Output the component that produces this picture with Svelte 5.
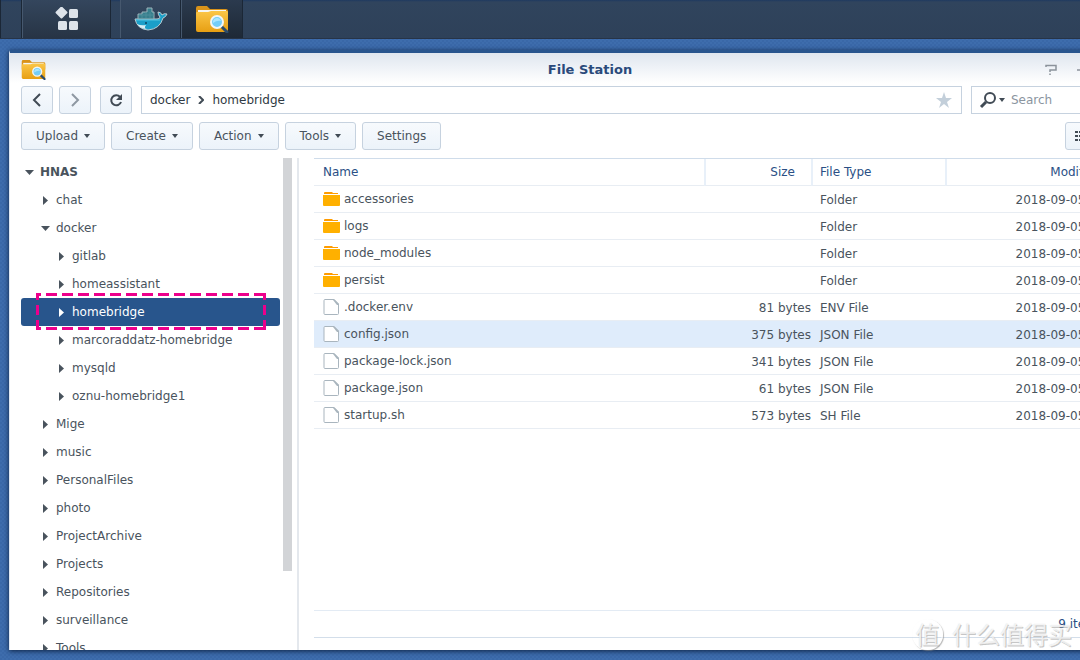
<script lang="ts">
  type Node = { name: string; level: number; open?: boolean };
  type Entry = { name: string; size: string; type: string; modified: string };

  const tree: Node[] = [
    { name: 'HNAS', level: 0, open: true },
    { name: 'chat', level: 1 },
    { name: 'docker', level: 1, open: true },
    { name: 'gitlab', level: 2 },
    { name: 'homeassistant', level: 2 },
    { name: 'homebridge', level: 2 },
    { name: 'marcoraddatz-homebridge', level: 2 },
    { name: 'mysqld', level: 2 },
    { name: 'oznu-homebridge1', level: 2 },
    { name: 'Mige', level: 1 },
    { name: 'music', level: 1 },
    { name: 'PersonalFiles', level: 1 },
    { name: 'photo', level: 1 },
    { name: 'ProjectArchive', level: 1 },
    { name: 'Projects', level: 1 },
    { name: 'Repositories', level: 1 },
    { name: 'surveillance', level: 1 },
    { name: 'Tools', level: 1 },
  ];

  const date = '2018-09-05 00:00:00';
  const files: Entry[] = [
    { name: 'accessories', size: '', type: 'Folder', modified: date },
    { name: 'logs', size: '', type: 'Folder', modified: date },
    { name: 'node_modules', size: '', type: 'Folder', modified: date },
    { name: 'persist', size: '', type: 'Folder', modified: date },
    { name: '.docker.env', size: '81 bytes', type: 'ENV File', modified: date },
    { name: 'config.json', size: '375 bytes', type: 'JSON File', modified: date },
    { name: 'package-lock.json', size: '341 bytes', type: 'JSON File', modified: date },
    { name: 'package.json', size: '61 bytes', type: 'JSON File', modified: date },
    { name: 'startup.sh', size: '573 bytes', type: 'SH File', modified: date },
  ];

  const menus = ['Upload', 'Create', 'Action', 'Tools'];

  let currentFolder = $state('homebridge');
  let currentFile = $state('config.json');
  let query = $state('');
</script>

{#snippet stationIcon(id: string)}
  <svg class="station-icon" viewBox="0 0 34 28" aria-hidden="true">
    <defs>
      <linearGradient id="{id}-body" x1="0" y1="0" x2="0" y2="1">
        <stop offset="0" stop-color="#fbc647" />
        <stop offset="1" stop-color="#e79f13" />
      </linearGradient>
    </defs>
    <path d="M1 3Q1 1 3 1H12L15 4H31Q33 4 33 6V14H1Z" fill="#d9931a" />
    <rect x="3" y="5" width="28" height="8" fill="#f6f6f2" />
    <path d="M1 8Q1 7 2 7H13L16 6H32Q33 6 33 7V25Q33 27 31 27H3Q1 27 1 25Z" fill="url(#{id}-body)" />
    <path d="M27 22L32 27" stroke="#2b4c6c" stroke-width="3" stroke-linecap="round" />
    <circle cx="22" cy="17" r="6" fill="#74cdf8" stroke="#f2f5f4" stroke-width="2" />
    <path d="M18 16Q19 13 22 13Q25 13 26 16Q22 15 18 18Z" fill="#a9e5ff" />
  </svg>
{/snippet}

<div class="desktop">
  <header class="taskbar">
    <button class="task task-edge" aria-label="Show desktop"></button>
    <button class="task task-main" aria-label="Main menu">
      <svg width="24" height="24" viewBox="0 0 24 24" fill="#dde3ea">
        <rect x="2" y="1" width="9" height="9" rx="1" transform="rotate(45 6.500 5.500)" />
        <rect x="14" y="2" width="9" height="9" rx="1.500" />
        <rect x="3" y="14" width="9" height="9" rx="1.500" />
        <rect x="14" y="14" width="9" height="9" rx="1.500" />
      </svg>
    </button>
    <button class="task task-docker" aria-label="Docker">
      <svg width="34" height="24" viewBox="0 0 34 24">
        <path d="M1 12H23Q26 12 26 10Q24 8 24 5Q27 5 28 8Q30 6 33 7Q32 10 29 11Q26 22 14 23Q3 22 1 12Z" fill="#1b9fc9" stroke="#b8cbd2" stroke-width="1" />
        <path d="M3 17Q7 19 12 18Q9 22 14 22Q6 22 3 17Z" fill="#d8eef4" />
        <path d="M4 12V7H8V5H13V1H18V5H20V12Z" fill="#377f8d" stroke="#9bb4bb" stroke-width="1" />
        <path d="M8 8V11M12 5V11M16 5V11M5 8H20" stroke="#4c8d9a" stroke-width="1" />
        <path d="M2 13H26" stroke="#55c5e2" stroke-width="1" />
        <circle cx="12" cy="16" r="1" fill="#0b4660" />
      </svg>
    </button>
    <button class="task task-files" aria-label="File Station">{@render stationIcon('task')}</button>
  </header>

  <main class="window">
    <div class="titlebar">
      {@render stationIcon('title')}
      <h1>File Station</h1>
      <div class="window-controls">
        <button aria-label="Help">
          <svg width="12" height="12" viewBox="0 0 12 12"><path d="M1 3V1.500H11V6H5V8M5 9.500V11" fill="none" stroke="#8b929b" stroke-width="1.500" /></svg>
        </button>
        <button aria-label="Minimize">
          <svg width="12" height="12" viewBox="0 0 12 12"><path d="M0 6H12" stroke="#8b929b" stroke-width="1.500" /></svg>
        </button>
        <button aria-label="Close">
          <svg width="12" height="12" viewBox="0 0 12 12"><path d="M1 1L11 11M11 1L1 11" stroke="#8b929b" stroke-width="1.500" /></svg>
        </button>
      </div>
    </div>

    <div class="navbar">
      <div class="history">
        <button class="btn square" aria-label="Back">
          <svg width="14" height="14" viewBox="0 0 14 14"><path d="M10 1L4 7L10 13" fill="none" stroke="#414b55" stroke-width="2" /></svg>
        </button>
        <button class="btn square" aria-label="Forward">
          <svg width="14" height="14" viewBox="0 0 14 14"><path d="M4 1L10 7L4 13" fill="none" stroke="#8e98a2" stroke-width="2" /></svg>
        </button>
      </div>
      <button class="btn square" aria-label="Refresh">
        <svg width="14" height="14" viewBox="0 0 14 14">
          <path d="M11 4A5 5 0 1 0 12 9" fill="none" stroke="#414b55" stroke-width="2" />
          <path d="M13 1V7H7Z" fill="#414b55" />
        </svg>
      </button>
      <nav class="path" aria-label="Path">
        <a href="#docker">docker</a>
        <svg width="6" height="8" viewBox="0 0 6 8"><path d="M1 0L5 4L1 8" fill="none" stroke="#414b55" stroke-width="2" /></svg>
        <a href="#homebridge">homebridge</a>
        <button class="star" aria-label="Add to favorites">
          <svg width="16" height="16" viewBox="0 0 16 16"><path d="M8 0L10 6H16L11 10L13 16L8 12L3 16L5 10L0 6H6Z" fill="#c3cfda" /></svg>
        </button>
      </nav>
      <label class="search">
        <svg width="18" height="18" viewBox="0 0 18 18">
          <circle cx="11" cy="7" r="5" fill="none" stroke="#414b55" stroke-width="2" />
          <path d="M7 11L2 16" stroke="#414b55" stroke-width="3" />
        </svg>
        <i class="caret"></i>
        <input type="text" placeholder="Search" aria-label="Search" bind:value={query} />
      </label>
    </div>

    <div class="toolbar">
      {#each menus as menu}
        <button class="btn">{menu}<i class="caret"></i></button>
      {/each}
      <button class="btn">Settings</button>
      <button class="btn view" aria-label="List view">
        <svg width="14" height="12" viewBox="0 0 14 12"><path d="M0 2H3M0 6H3M0 10H3M4 2H14M4 6H14M4 10H14" stroke="#414b55" stroke-width="2" /></svg>
        <i class="caret"></i>
      </button>
    </div>

    <div class="content">
      <aside class="sidebar">
        <ul class="tree">
          {#each tree as node}
            <li>
              <button
                class="node level-{node.level}"
                class:selected={node.name === currentFolder}
                onclick={() => (currentFolder = node.name)}
              >
                <svg width="9" height="9" viewBox="0 0 9 9">
                  {#if node.open}
                    <path d="M0 2H9L4.500 7Z" fill="currentColor" />
                  {:else}
                    <path d="M2 0L7 4.500L2 9Z" fill="currentColor" />
                  {/if}
                </svg>
                {node.name}
              </button>
              {#if node.name === 'homebridge'}
                <svg class="marker" width="230" height="37" viewBox="0 0 230 37" aria-hidden="true">
                  <path d="M0 1.500H230M0 35.500H230" stroke-dasharray="11 5" stroke-dashoffset="6" />
                  <path d="M1.500 0V37M228.500 0V37" stroke-dasharray="10 5" stroke-dashoffset="3" />
                </svg>
              {/if}
            </li>
          {/each}
        </ul>
        <div class="scrollbar"><div class="thumb"></div></div>
      </aside>

      <section class="list">
        <table>
          <thead>
            <tr>
              <th class="name">Name</th>
              <th class="size">Size</th>
              <th class="type">File Type</th>
              <th class="modified">Modified Date</th>
            </tr>
          </thead>
          <tbody>
            {#each files as file}
              <tr class:current={file.name === currentFile} onclick={() => (currentFile = file.name)}>
                <td class="name">
                  <div class="file">
                    {#if file.type === 'Folder'}
                      <svg width="17" height="16" viewBox="0 0 17 16">
                        <path d="M1 2Q1 1 2 1H9L10 2H15V3H1Z" fill="#ff9c00" />
                        <path d="M0 4H17V14Q17 15 16 15H1Q0 15 0 14Z" fill="#ffb000" />
                      </svg>
                    {:else}
                      <svg width="17" height="16" viewBox="0 0 17 16">
                        <path d="M2 0.500H11L15.500 5V14.500Q15.500 15.500 14.500 15.500H2Q1 15.500 1 14.500V1.500Q1 0.500 2 0.500Z" fill="#fff" stroke="#a9b5be" />
                        <path d="M11 0L16 5V6H14L10 1Z" fill="#a9b5be" />
                      </svg>
                    {/if}
                    {file.name}
                  </div>
                </td>
                <td class="size">{file.size}</td>
                <td class="type">{file.type}</td>
                <td class="modified">{file.modified}</td>
              </tr>
            {/each}
          </tbody>
        </table>
        <footer class="status">9 items</footer>
      </section>
    </div>
  </main>

  <div class="watermark">
    <span class="seal">值</span>
    <span>什么值得买</span>
  </div>
</div>

<style>
  :global(body) {
    overflow: hidden;
  }
  .desktop {
    position: relative;
    display: flex;
    flex-direction: column;
    height: 100vh;
    box-sizing: border-box;
    padding-bottom: 10px;
    overflow: hidden;
    background: repeating-conic-gradient(#3a68a8 0 25%, #3e6dad 0 50%) 0 0 / 4px 4px;
    font-family: Verdana, "DejaVu Sans", sans-serif;
    font-size: 12px;
    line-height: 16px;
    color: #49535d;
  }
  button {
    font: inherit;
    color: inherit;
    background: none;
    border: 0;
    padding: 0;
    margin: 0;
  }
  svg {
    display: block;
    flex: none;
  }

  .taskbar {
    display: flex;
    flex: none;
    height: 39px;
    background: linear-gradient(#1f3a60 0, #30445d 2px, #2e4159 100%);
    border-bottom: 1px solid #273447;
    box-sizing: border-box;
  }
  .task {
    display: flex;
    align-items: center;
    justify-content: center;
    box-sizing: border-box;
    border-left: 1px solid #46586e;
    border-right: 1px solid #1b2736;
  }
  .task-edge {
    width: 22px;
    border-left-color: #1b2736;
  }
  .task-main {
    width: 89px;
    background: linear-gradient(#34465d, #273445);
    margin-right: 9px;
  }
  .task-docker {
    width: 61px;
    background: linear-gradient(#34475f, #2a3b51);
  }
  .task-files {
    width: 62px;
    background: linear-gradient(#2b3a4e, #1e2936);
  }
  .station-icon {
    width: 25px;
    height: 21px;
  }
  .task-files .station-icon {
    width: 34px;
    height: 28px;
  }

  .window {
    display: flex;
    flex-direction: column;
    flex: 1;
    min-height: 0;
    width: calc(100% + 82px);
    margin: 11px 0 0 9px;
    box-sizing: border-box;
    border-top: 3px solid #28558e;
    border-left: 1px solid #dfe8f3;
    background: linear-gradient(#dfe6ef, #fff 30px);
    box-shadow: 0 1px 5px #0b2040;
  }
  .titlebar {
    display: grid;
    grid-template-columns: 1fr auto 1fr;
    align-items: center;
    flex: none;
    height: 33px;
    padding: 0 12px 0 11px;
  }
  h1 {
    margin: 0;
    font-size: 13px;
    line-height: 16px;
    color: #2a4a7b;
  }
  .window-controls {
    display: flex;
    justify-content: flex-end;
    gap: 20px;
    padding-right: 38px;
  }

  .btn {
    display: flex;
    align-items: center;
    justify-content: center;
    gap: 6px;
    height: 28px;
    padding: 0 14px;
    box-sizing: border-box;
    border: 1px solid #c6d2df;
    border-radius: 3px;
    background: linear-gradient(#f7fafd, #ecf3fa);
  }
  .btn.square {
    width: 32px;
    padding: 0;
  }
  .caret {
    border: 3px solid transparent;
    border-top: 4px solid #414b55;
    border-bottom: 0;
  }
  .navbar {
    display: flex;
    flex: none;
    gap: 9px;
    padding: 0 12px 8px 11px;
  }
  .history {
    display: flex;
    gap: 6px;
  }
  .path, .search {
    display: flex;
    align-items: center;
    height: 28px;
    box-sizing: border-box;
    border: 1px solid #c6d2df;
    background: #fff;
  }
  .path {
    flex: 1;
    gap: 8px;
    padding: 0 9px 0 8px;
  }
  .path a {
    color: #2f3942;
    text-decoration: none;
  }
  .star {
    margin-left: auto;
  }
  .search {
    width: 188px;
    gap: 2px;
    padding-left: 7px;
  }
  .search input {
    width: 100%;
    min-width: 0;
    padding: 0 4px;
    border: 0;
    outline: 0;
    font: inherit;
    background: none;
  }
  .search input::placeholder {
    color: #8b959f;
    opacity: 1;
  }
  .toolbar {
    display: flex;
    flex: none;
    gap: 6px;
    padding: 0 12px 8px 11px;
  }
  .view {
    width: 94px;
    margin-left: auto;
    padding: 0 9px;
    justify-content: flex-start;
  }

  .content {
    display: flex;
    flex: 1;
    min-height: 0;
  }
  .sidebar {
    display: flex;
    flex: none;
    width: 289px;
    box-sizing: border-box;
    padding: 0 5px 0 11px;
    border-right: 2px solid #e4e8ed;
    overflow: hidden;
  }
  .tree {
    flex: 1;
    margin: 0;
    padding: 0 3px 0 0;
    list-style: none;
  }
  .tree li {
    position: relative;
  }
  .node {
    display: flex;
    align-items: center;
    gap: 6px;
    width: 100%;
    height: 28px;
    border-radius: 3px;
    text-align: left;
  }
  .level-0 {
    padding-left: 4px;
    font-weight: bold;
  }
  .level-1 {
    padding-left: 20px;
  }
  .level-2 {
    padding-left: 36px;
  }
  .node.selected {
    background: #28558c;
    color: #fff;
  }
  .marker {
    position: absolute;
    left: 15px;
    top: -5px;
    fill: none;
    stroke: #ec008c;
    stroke-width: 3px;
    pointer-events: none;
  }
  .scrollbar {
    width: 9px;
  }
  .thumb {
    height: 84%;
    background: #d2d4d7;
  }

  .list {
    display: flex;
    flex-direction: column;
    flex: 1;
    min-width: 0;
    padding: 0 12px 12px 15px;
  }
  table {
    width: 100%;
    table-layout: fixed;
    border-collapse: separate;
    border-spacing: 0;
    border-top: 1px solid #cfdcea;
  }
  th, td {
    height: 27px;
    box-sizing: border-box;
    padding: 0;
    border-bottom: 1px solid #e8edf3;
    text-align: left;
    white-space: nowrap;
  }
  td {
    padding-top: 1px;
  }
  th {
    font-weight: normal;
    color: #2a4f85;
  }
  th + th {
    border-left: 2px solid #e8f0f9;
  }
  .name {
    width: 390px;
    padding: 0 0 0 9px;
  }
  .size {
    width: 107px;
    text-align: right;
  }
  th.size {
    padding-right: 16px;
  }
  .type {
    width: 134px;
    padding-left: 9px;
  }
  th.type {
    padding-left: 7px;
  }
  .modified {
    padding-right: 16px;
    text-align: right;
  }
  th.modified {
    padding-right: 25px;
  }
  .current td {
    background: #dfecfb;
  }
  .file {
    display: flex;
    align-items: center;
    gap: 4px;
  }
  .status {
    margin-top: auto;
    height: 28px;
    box-sizing: border-box;
    padding: 5px 56px 5px 0;
    border-top: 1px solid #e3ebf4;
    border-bottom: 1px solid #d3deea;
    text-align: right;
    color: #2a4f85;
  }

  .watermark {
    position: absolute;
    right: 8px;
    bottom: 10px;
    display: flex;
    align-items: center;
    gap: 9px;
    font-family: "Noto Sans CJK SC", sans-serif;
    font-size: 24px;
    line-height: 32px;
    color: #fffb;
    text-shadow: 1px 1px 0 #9998, 0 0 1px #9996;
    pointer-events: none;
  }
  .seal {
    width: 31px;
    height: 31px;
    line-height: 29px;
    text-align: center;
    border-radius: 50%;
    box-shadow: 1px 1px 1px #8889, inset -1px -1px 1px #fffc;
  }
</style>
